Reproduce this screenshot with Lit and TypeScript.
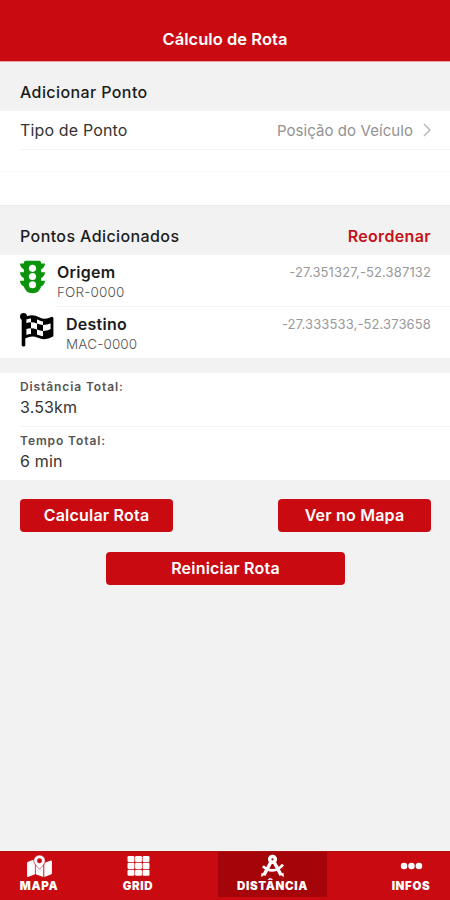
import { LitElement, html, css, svg } from "lit";
import { customElement } from "lit/decorators.js";

const light = html`<svg class="light" viewBox="0 0 26 34">
  <path fill="#0b930b" d="M6 0h14q2 0 2 3h4q0 4-4 6v3h4q0 4-4 6v3h4q0 4-4 6q-2 7-9 7t-9-7q-4-2-4-6h4v-3q-4-2-4-6h4v-3q-4-2-4-6h4q0-3 2-3z"/>
  <circle cx="13" cy="8" r="3.7" fill="#fff"/><circle cx="13" cy="16.500" r="3.7" fill="#fff"/><circle cx="13" cy="25" r="3.7" fill="#fff"/>
</svg>`;

const flag = html`<svg class="flag" viewBox="0 0 34 34">
  <circle cx="3.500" cy="3.500" r="3.500"/><path d="M1.700 3h3.600v29.500q0 1-1.800 1t-1.800-1z"/>
  <path fill="#fff" stroke="#000" stroke-width="2.800" stroke-linejoin="round" d="M5 5.500Q12 2 18.500 5.500T32 5.300V22.500Q25 26.500 18.500 23.500T5 24z"/>
  <path d="M11 4.200q3-.2 6 1.200v5.200q-3-1.300-6-1.300zM23 6.700q3.500-.1 8-2v5.500q-4 1.700-8 1.900zM5.500 10.500q3-1.100 5.500-1.200v6q-2.500 0-5.500 1zM17 10.600q3 1.300 6 1.500v6q-3-.3-6-1.600zM11 15.300q3 .1 6 1.200v6.200q-3-1.100-6-1.100zM23 18.100q4-.2 8-2.100v6.500q-4 2-8 2z"/>
</svg>`;

const icons = {
  map: svg`<path d="M0 9.500q0-1 1-1.400l5.600-2.300q.5 1.800 1.600 3.600V21L1 24q-1 .3-1-.8zM9 10.800l3.500 4q.5.500 1 0l3.500-4V24l-8-2.800zM18 9.400l6.800-2.700q1.200-.3 1.200.8v12.500q0 1-1 1.400L18 24z" transform="translate(0,-2)"/><path fill-rule="evenodd" d="M13 -1a6 6 0 0 1 6 6q0 3-6 9-6-6-6-9a6 6 0 0 1 6-6zm0 3.700a2.300 2.300 0 1 0 0 4.600 2.300 2.300 0 0 0 0-4.600z" stroke="#c90b11" stroke-width=".6"/>`,
  grid: svg`${[1.5, 9.4, 17.3].map(x => [0, 7.2, 14.4].map(y => svg`<rect x=${x} y=${y} width="7.200" height="6.400" rx="1.300"/>`))}`,
  compass: svg`<g fill="none" stroke="#fff" stroke-width="3.600"><circle cx="13" cy="3.500" r="3"/><path d="M11.500 6L4 20M14.500 6L22 20"/><path stroke-width="2.800" d="M3 10.500q4 4.500 10 4.500T24 9"/></g><path d="M1.500 17.500l4 2-4.500 2.500zM24.500 17.500l-4 2 4.500 2.500z"/>`,
  dots: svg`<circle cx="5.200" cy="10.500" r="3.400"/><circle cx="13" cy="10.500" r="3.400"/><circle cx="20.800" cy="10.500" r="3.400"/>`,
};

@customElement("app-root")
export class AppRoot extends LitElement {
  static styles = css`
    :host { display: flex; flex-direction: column; height: 900px; width: 450px; background: #f2f2f2; font-family: Inter, "Liberation Sans", sans-serif; color: #1c1c1c; overflow: hidden; }
    * { box-sizing: border-box; }
    span { white-space: nowrap; }
    header { height: 62px; background: #c90b11; color: #fff; border-bottom: 1px solid #e9a0a2; padding-top: 29px; text-align: center; font-size: 16.500px; line-height: 20px; font-weight: 600; letter-spacing: .05px; }
    .head { display: flex; justify-content: space-between; align-items: center; padding: 11px 19px 0 20px; height: 49px; font-size: 16px; font-weight: 500; letter-spacing: .4px; }
    .head.second { height: 50px; border-top: 1px solid #ececec; }
    .reorder { color: #c41219; font-weight: 600; letter-spacing: .35px; }
    .white { background: #fff; }
    .form { height: 94px; }
    .type { display: flex; align-items: center; height: 39px; margin-left: 20px; padding-right: 19px; border-bottom: 1px solid #f3f3f3; font-size: 16px; color: #333; letter-spacing: .15px; }
    .value { margin-left: auto; color: #929292; font-size: 15px; letter-spacing: .07px; }
    .chev { width: 8px; height: 14px; margin-left: 10px; fill: none; stroke: #b9b9b9; stroke-width: 1.500; }
    .blank { height: 22px; border-bottom: 1px solid #fafafa; }
    .point { display: flex; padding-left: 20px; height: 52px; }
    .point:last-child { height: 51px; }
    .body { flex: 1; display: flex; justify-content: space-between; padding: 7px 19px 0 0; }
    .line { border-bottom: 1px solid #f4f4f4; }
    .light { width: 25px; height: 34px; margin: 5px 12px 0 0; }
    .flag { width: 34px; height: 34px; margin: 6px 12px 0 0; }
    .names { display: flex; flex-direction: column; }
    .name { font-size: 16px; line-height: 20px; font-weight: 600; letter-spacing: .25px; }
    .plate { font-size: 13.500px; line-height: 20px; font-weight: 300; color: #555; letter-spacing: .15px; }
    .coord { font-size: 13px; line-height: 20px; color: #999; letter-spacing: .12px; }
    .totals { margin-top: 15px; height: 107px; padding-left: 20px; }
    .total { display: flex; flex-direction: column; height: 54px; padding-top: 5px; }
    .label { font-size: 12px; line-height: 18px; font-weight: 600; color: #555; letter-spacing: .9px; }
    .num { font-size: 16px; line-height: 23px; color: #333; letter-spacing: .15px; }
    .actions { display: flex; flex-wrap: wrap; justify-content: space-between; padding: 19px 19px 0 20px; }
    button { height: 33px; width: 153px; border: 0; border-radius: 4px; padding: 0; background: #c90b11; color: #fff; font: 600 16px/33px Inter, sans-serif; letter-spacing: .2px; }
    .reset { width: 239px; margin: 20px auto 0 86px; }
    nav { display: flex; justify-content: space-between; margin-top: auto; height: 49px; background: #c90b11; color: #fff; border-top: 1px solid #b01317; }
    .tab { display: flex; flex-direction: column; align-items: center; padding-top: 4px; width: 78px; height: 45px; }
    .grid { margin-left: 21px; }
    .active { width: 109px; background: #a50409; margin-left: 41px; }
    .infos { margin-left: 45px; }
    .tab svg { width: 25px; height: 21px; fill: #fff; overflow: visible; }
    .tab span { font-size: 11.500px; line-height: 15px; margin-top: 2px; font-weight: 900; letter-spacing: .65px; }
  `;
  point(icon: unknown, name: string, plate: string, coord: string, line = "") {
    return html`<div class="point">${icon}<div class="body ${line}"><div class="names"><span class="name">${name}</span><span class="plate">${plate}</span></div><span class="coord">${coord}</span></div></div>`;
  }
  tab(icon: unknown, text: string, cls: string) {
    return html`<div class="tab ${cls}"><svg viewBox="0 0 26 22">${icon}</svg><span>${text}</span></div>`;
  }
  render() {
    return html`
      <header><span>Cálculo de Rota</span></header>
      <div class="head"><span>Adicionar Ponto</span></div>
      <div class="white form">
        <div class="type"><span>Tipo de Ponto</span><span class="value">Posição do Veículo</span><svg class="chev" viewBox="0 0 8 14"><path d="M1 1l6 6-6 6"/></svg></div>
        <div class="blank"></div>
      </div>
      <div class="head second"><span>Pontos Adicionados</span><span class="reorder">Reordenar</span></div>
      <div class="white">
        ${this.point(light, "Origem", "FOR-0000", "-27.351327,-52.387132", "line")}
        ${this.point(flag, "Destino", "MAC-0000", "-27.333533,-52.373658")}
      </div>
      <div class="white totals">
        <div class="total line"><span class="label">Distância Total:</span><span class="num">3.53km</span></div>
        <div class="total"><span class="label">Tempo Total:</span><span class="num">6 min</span></div>
      </div>
      <div class="actions"><button>Calcular Rota</button><button>Ver no Mapa</button><button class="reset">Reiniciar Rota</button></div>
      <nav>
        ${this.tab(icons.map, "MAPA", "map")}
        ${this.tab(icons.grid, "GRID", "grid")}
        ${this.tab(icons.compass, "DISTÂNCIA", "active")}
        ${this.tab(icons.dots, "INFOS", "infos")}
      </nav>`;
  }
}
